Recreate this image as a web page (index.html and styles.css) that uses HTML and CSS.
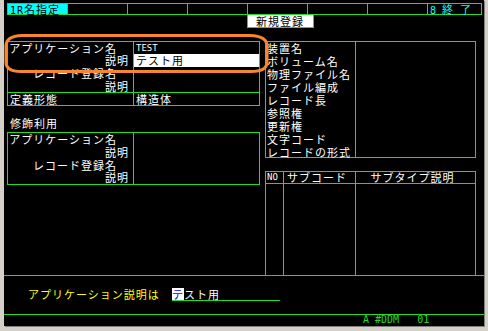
FILE: index.html
```html
<!DOCTYPE html>
<html lang="ja">
<head>
  <meta charset="UTF-8">
  <title>1R名指定</title>
  <link rel="stylesheet" href="styles.css">
</head>
<body>
  <div class="window">
    <div class="screen">
      <div class="fkeys">
        <div class="fkey fkey-active"><span class="half">1R</span>名指定</div>
        <div class="fkey"></div>
        <div class="fkey"></div>
        <div class="fkey"></div>
        <div class="fkey"></div>
        <div class="fkey"></div>
        <div class="fkey"></div>
        <div class="fkey fkey-exit"><span class="half">8 </span>終<span class="half"> </span>了</div>
      </div>

      <div class="mode">新規登録</div>

      <div class="main">
        <div class="col-left">
          <div class="box def-box">
            <div class="lbl name">アプリケーション名</div>
            <div class="val half">TEST</div>
            <div class="lbl desc">説明</div>
            <div class="val field">テスト用</div>
            <div class="lbl name">レコード登録名</div>
            <div class="val"></div>
            <div class="lbl desc">説明</div>
            <div class="val"></div>
            <div class="lbl split">定義形態</div>
            <div class="val split">構造体</div>
          </div>

          <div class="caption">修飾利用</div>

          <div class="box qual-box">
            <div class="lbl name">アプリケーション名</div>
            <div class="val"></div>
            <div class="lbl desc">説明</div>
            <div class="val"></div>
            <div class="lbl name">レコード登録名</div>
            <div class="val"></div>
            <div class="lbl desc">説明</div>
            <div class="val"></div>
          </div>
        </div>

        <div class="col-right">
          <div class="box file-box">
            <div class="lbl">装置名</div><div class="val"></div>
            <div class="lbl">ボリューム名</div><div class="val"></div>
            <div class="lbl">物理ファイル名</div><div class="val"></div>
            <div class="lbl">ファイル編成</div><div class="val"></div>
            <div class="lbl">レコード長</div><div class="val"></div>
            <div class="lbl">参照権</div><div class="val"></div>
            <div class="lbl">更新権</div><div class="val"></div>
            <div class="lbl">文字コード</div><div class="val"></div>
            <div class="lbl">レコードの形式</div><div class="val"></div>
          </div>

          <div class="box sub-box">
            <div class="head col-no half">NO</div>
            <div class="head col-code">サブコード</div>
            <div class="head col-desc">サブタイプ説明</div>
            <div class="col-no"></div>
            <div class="col-code"></div>
            <div class="col-desc"></div>
          </div>
        </div>
      </div>

      <div class="prompt">
        <div class="prompt-label">アプリケーション説明は</div>
        <div class="entry"><span class="cursor">テ</span>スト用</div>
      </div>

      <div class="status">A #DDM   01</div>
    </div>

    <svg class="mark" width="488" height="331" viewBox="0 0 488 331">
      <path d="M22 35.5 L250 35.5 Q267 36 267 46 L267 62 Q267 71.5 251 71.5 L21 71.5 Q6 71.5 6 62 L6 46 Q6 36 22 35.5 Z" fill="none" stroke="#f7862e" stroke-width="3"/>
    </svg>
  </div>
</body>
</html>
```

FILE: styles.css
```css
* {
  margin: 0;
  padding: 0;
  box-sizing: border-box;
}

:root {
  --line: #22dd22;
  --cyan: #00ffff;
  --text: #ffffff;
  --yellow: #ffff00;
  --frame: #d4d0c8;
}

body {
  background: var(--frame);
  color: var(--text);
  font-family: "Noto Sans CJK JP", sans-serif;
  font-size: 11px;
  letter-spacing: 1px;
}

.window {
  position: relative;
  width: 488px;
  height: 331px;
  padding: 0 4px 5px 4px;
  background: var(--frame);
}

.screen {
  width: 480px;
  height: 326px;
  background: #000;
  display: flex;
  flex-direction: column;
  box-shadow: 1px 1px 0 #808080;
}

.half {
  font-family: "DejaVu Sans Mono", monospace;
  font-size: 9px;
  letter-spacing: 0;
  white-space: pre;
}

/* function key bar */
.fkeys {
  display: grid;
  grid-template-columns: repeat(7, 59px) 53px;
  gap: 1px;
  width: 475px;
  height: 12px;
  margin: 3px 0 0 3px;
  border: 1px solid var(--line);
  background: var(--line);
}

.fkey {
  background: #000;
  height: 10px;
  line-height: 10px;
  white-space: pre;
}

.fkey .half {
  font-size: 10px;
}

.fkey-active {
  background: var(--cyan);
  color: #000;
  padding-left: 2px;
}

.fkey-active .half {
  letter-spacing: 1px;
}

.fkey-exit {
  color: var(--cyan);
  padding-left: 2px;
}

.mode {
  width: 67px;
  height: 14px;
  margin: -1px 0 0 243px;
  padding-left: 8px;
  border: 1px solid var(--line);
  background: #fff;
  color: #000;
  line-height: 12px;
}

/* main panels */
.main {
  display: flex;
  gap: 5px;
  height: 247px;
  padding: 13px 0 0 3px;
}

.col-left {
  width: 253px;
}

.col-right {
  width: 211px;
  display: flex;
  flex-direction: column;
  gap: 13px;
}

.box {
  display: grid;
  border: 1px solid var(--line);
}

.lbl,
.val {
  line-height: 12px;
  white-space: nowrap;
}

.lbl {
  border-right: 1px solid var(--line);
}

.val {
  padding-left: 2px;
}

.def-box,
.qual-box {
  grid-template-columns: 126px 1fr;
}

.def-box {
  grid-template-rows: 12px 13px 13px 12px 13px;
}

.qual-box {
  grid-template-rows: 13px 13px 12px 13px;
}

.lbl.name {
  text-align: right;
  padding-right: 16px;
}

.lbl.desc {
  text-align: right;
  padding-right: 4px;
}

.lbl.split {
  padding-left: 2px;
}

.split {
  border-top: 1px solid var(--line);
}

.val.field {
  background: #fff;
  color: #000;
  line-height: 13px;
}

.caption {
  height: 13px;
  margin: 11px 0 2px;
  padding-left: 3px;
  line-height: 13px;
}

.file-box {
  grid-template-columns: 90px 1fr;
  grid-template-rows: repeat(8, 13px) 11px;
  height: 117px;
}

.file-box .lbl {
  padding-left: 1px;
}

.sub-box {
  flex: 1;
  grid-template-columns: 18px 72px 1fr;
  grid-template-rows: 12px 1fr;
  border-bottom: none;
}

.col-no,
.col-code {
  border-right: 1px solid var(--line);
}

.head {
  border-bottom: 1px solid var(--line);
  line-height: 10px;
  white-space: nowrap;
}

.head.col-no {
  padding-left: 1px;
}

.head.col-code {
  padding-left: 3px;
}

.head.col-desc {
  text-align: center;
  padding-right: 6px;
}

/* input line */
.prompt {
  display: flex;
  height: 39px;
  padding: 12px 0 0 24px;
  border-top: 1px solid var(--line);
}

.prompt-label {
  width: 144px;
  height: 12px;
  line-height: 12px;
  color: var(--yellow);
  white-space: nowrap;
}

.entry {
  width: 108px;
  height: 13px;
  line-height: 12px;
  border-bottom: 1px solid var(--line);
  white-space: nowrap;
}

.cursor {
  display: inline-block;
  width: 12px;
  height: 12px;
  background: #fff;
  color: #0000ff;
  vertical-align: top;
}

.status {
  height: 12px;
  padding-left: 359px;
  border-top: 1px solid var(--line);
  color: var(--line);
  font-family: "DejaVu Sans Mono", monospace;
  font-size: 10px;
  letter-spacing: 0;
  line-height: 10px;
  white-space: pre;
}

.mark {
  position: absolute;
  top: 0;
  left: 0;
  pointer-events: none;
}
```
